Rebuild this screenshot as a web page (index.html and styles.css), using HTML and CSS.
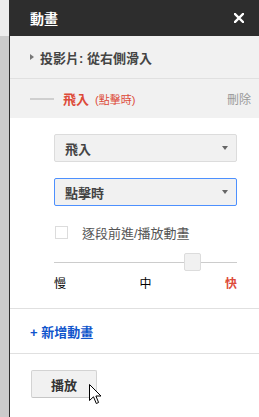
FILE: index.html
```html
<!DOCTYPE html>
<html>
<head>
<meta charset="utf-8">
<link rel="stylesheet" href="styles.css">
</head>
<body>
<div class="shell">
  <div class="strip"><div class="strip-top"></div><div class="strip-rest"></div></div>
  <div class="panel">
    <div class="header">
      <span class="title">動畫</span>
      <svg class="close" width="10" height="10" viewBox="0 0 10 10"><path d="M1 1 L9 9 M9 1 L1 9" stroke="#fff" stroke-width="2.4" stroke-linecap="square"/></svg>
    </div>
    <div class="slide-row">
      <span class="tri"></span>
      <span class="slide-text">投影片: 從右側滑入</span>
    </div>
    <div class="anim">
      <div class="anim-head">
        <span class="dash"></span>
        <span class="anim-name">飛入</span>
        <span class="anim-when">(點擊時)</span>
        <span class="delete">刪除</span>
      </div>
      <div class="anim-body">
        <div class="select"><span>飛入</span><span class="caret"></span></div>
        <div class="select focused"><span>點擊時</span><span class="caret"></span></div>
        <div class="check-row"><span class="checkbox"></span><span class="check-label">逐段前進/播放動畫</span></div>
        <div class="slider"><div class="track"></div><div class="thumb"></div></div>
        <div class="speeds"><span>慢</span><span>中</span><span class="fast">快</span></div>
      </div>
    </div>
    <div class="add-row"><span class="add">+ 新增動畫</span></div>
    <div class="play-row">
      <div class="play">播放</div>
      <svg class="cursor" width="13" height="21" viewBox="0 0 13 21"><path d="M0.5 0.5 L0.5 16.5 L4.5 12.8 L7.3 19.5 L9.6 18.5 L6.9 12 L12 12 Z" fill="#fff" stroke="#000" stroke-width="1" stroke-linejoin="miter"/></svg>
    </div>
  </div>
</div>
</body>
</html>
```

FILE: styles.css
```css
html, body {
  margin: 0;
  padding: 0;
  background: #fff;
}
body {
  width: 259px;
  height: 417px;
  overflow: hidden;
  font-family: "Liberation Sans", "Noto Sans CJK TC", sans-serif;
}
.shell {
  display: flex;
  height: 417px;
}
.strip {
  width: 9px;
  display: flex;
  flex-direction: column;
}
.strip-top {
  height: 36px;
  background: #ececec;
}
.strip-rest {
  flex: 1;
  background: #cbcbcb;
}
.panel {
  flex: 1;
  border-left: 1px solid #2d2d2d;
  display: flex;
  flex-direction: column;
  background: #fff;
  min-width: 0;
}
.header {
  height: 36px;
  background: #2d2d2d;
  display: flex;
  align-items: center;
  justify-content: space-between;
  padding: 0 15px 0 20px;
  color: #fff;
}
.title {
  font-weight: bold;
  font-size: 14px;
}
.close {
  display: block;
}
.slide-row {
  height: 42px;
  background: #f1f1f1;
  border-bottom: 1px solid #e0e0e0;
  display: flex;
  align-items: center;
  padding-left: 20px;
}
.tri {
  width: 0;
  height: 0;
  border-top: 3px solid transparent;
  border-bottom: 3px solid transparent;
  border-left: 4px solid #777;
  margin-right: 6px;
}
.slide-text {
  font-weight: bold;
  font-size: 13px;
  color: #444;
}
.anim {
  border-bottom: 1px solid #e0e0e0;
}
.anim-head {
  height: 39px;
  background: #f1f1f1;
  display: flex;
  align-items: center;
  padding: 0 8px 0 20px;
}
.dash {
  width: 24px;
  height: 2px;
  background: #cfcfcf;
  margin-right: 9px;
}
.anim-name {
  font-weight: bold;
  font-size: 13px;
  color: #dd4b39;
  margin-right: 6px;
}
.anim-when {
  font-size: 11px;
  color: #dd4b39;
}
.delete {
  margin-left: auto;
  font-size: 12px;
  color: #999;
}
.anim-body {
  padding: 16px 22px 17px 44px;
  display: flex;
  flex-direction: column;
}
.select {
  height: 26px;
  border: 1px solid #dcdcdc;
  border-radius: 2px;
  background: #f1f1f1;
  display: flex;
  align-items: center;
  justify-content: space-between;
  padding: 0 8px 0 10px;
  font-weight: bold;
  font-size: 13px;
  color: #444;
  margin-bottom: 16px;
}
.select.focused {
  border-color: #4d90fe;
}
.caret {
  width: 0;
  height: 0;
  border-left: 3px solid transparent;
  border-right: 3px solid transparent;
  border-top: 4px solid #666;
}
.check-row {
  display: flex;
  align-items: center;
  margin-top: 3px;
  height: 14px;
}
.checkbox {
  width: 11px;
  height: 11px;
  border: 1px solid #dcdcdc;
  background: #fff;
  margin: 0 14px 0 1px;
}
.check-label {
  font-size: 13px;
  color: #555;
}
.slider {
  position: relative;
  height: 18px;
  margin-top: 14px;
  display: flex;
  align-items: center;
}
.track {
  flex: 1;
  height: 1px;
  background: #cccccc;
}
.thumb {
  position: absolute;
  left: 130px;
  top: 0;
  width: 15px;
  height: 16px;
  border: 1px solid #dcdcdc;
  border-radius: 2px;
  background: #f1f1f1;
}
.speeds {
  display: flex;
  justify-content: space-between;
  font-size: 12px;
  color: #000;
  margin-top: 3px;
  padding-right: 0;
}
.fast {
  color: #dd4b39;
  font-weight: bold;
}
.add-row {
  height: 44px;
  border-bottom: 1px solid #e0e0e0;
  display: flex;
  align-items: center;
  padding-left: 20px;
}
.add {
  font-weight: bold;
  font-size: 13px;
  color: #1155cc;
}
.play-row {
  position: relative;
  padding: 16px 0 0 21px;
}
.play {
  width: 64px;
  height: 26px;
  border: 1px solid #d3d3d3;
  border-bottom-color: #c6c6c6;
  border-radius: 2px;
  background: #f1f1f1;
  display: flex;
  align-items: center;
  justify-content: center;
  font-weight: bold;
  font-size: 13px;
  color: #333;
}
.cursor {
  position: absolute;
  left: 79px;
  top: 30px;
}
```
